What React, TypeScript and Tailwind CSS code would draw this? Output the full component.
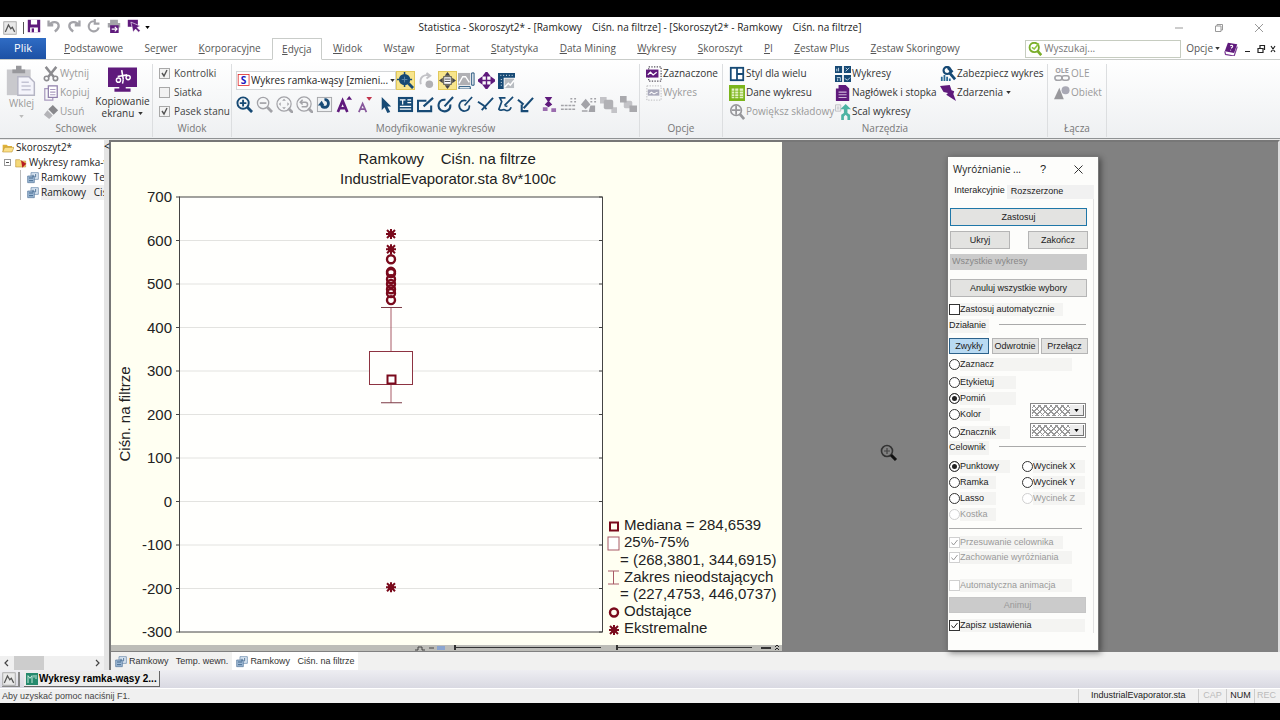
import React from 'react';

const NAVY = '#174a75';
const PURPLE = '#5f1a7c';
const GRAY = '#a3a3a8';

const line = (color: string, width = 2) => ({ fill: 'none', stroke: color, strokeWidth: width });

const icons: Record<string, React.ReactNode> = {
  app: (
    <>
      <rect x="1" y="1" width="16" height="16" fill="#e9e9e9" stroke="#9a9a9a" />
      <path d="M3 14l4-9 3 5 2-2 3 6" {...line('#555', 1.6)} />
    </>
  ),
  save: (
    <>
      <path d="M1 1h16v16H1z" fill={PURPLE} />
      <path d="M5 1h8v6H5zM4 11h10v6H4z" fill="#fff" />
      <path d="M6 12h3v5H6z" fill={PURPLE} />
    </>
  ),
  undo: <path d="M2 2v6h6M3 8c3-6 12-5 12 1 0 3-2 5-5 7" {...line(GRAY, 3)} />,
  redo: <path d="M16 2v6h-6M15 8c-3-6-12-5-12 1 0 3 2 5 5 7" {...line(GRAY, 3)} />,
  refresh: <path d="M15 11a6.500 6.500 0 1 1-5-8M10 0v6h6" {...line(GRAY, 2.8)} />,
  print: (
    <>
      <path d="M4 1h10v4H4zM1 5h16v6H1z" fill={GRAY} />
      <path d="M4 8h11v10H4z" fill={PURPLE} />
      <path d="M6 13h6M10 10l3 3-3 3" {...line('#fff', 1.4)} />
    </>
  ),
  select: (
    <>
      <path d="M1 1h13v9H1z" fill={PURPLE} />
      <path d="M5 4l12 5-4 2 4 4-2 2-4-4-3 4z" fill={PURPLE} stroke="#fff" strokeWidth=".8" />
    </>
  ),
  paste: (
    <>
      <path d="M1 3h13v14H1z" fill="#c9c9cd" />
      <path d="M4 3h7v2H4zM6 1h3v2H6z" fill="#98989c" />
      <path d="M7 7h6l3 3v7H7z" fill="#f4f4fb" stroke="#b5b5c4" strokeWidth=".8" />
      <path d="M9 10h4M9 12h5M9 14h5" {...line('#c3c3d4', 0.8)} />
    </>
  ),
  cut: (
    <>
      <path d="M3 1l9 11M15 1L6 12" {...line('#8b8b8f', 2.8)} />
      <circle cx="4" cy="14" r="2.500" {...line('#8b8b8f', 1.8)} />
      <circle cx="14" cy="14" r="2.500" {...line('#8b8b8f', 1.8)} />
    </>
  ),
  copy: (
    <>
      <path d="M2 4h9v13H2z" {...line('#a99abf', 1.4)} />
      <path d="M6 1h10v13H6z" fill="#fff" stroke="#8f7fab" strokeWidth="1.400" />
      <path d="M8 5h6M8 8h6M8 11h6" {...line('#a99abf', 1.2)} />
    </>
  ),
  erase: (
    <>
      <path d="M11 1l6 6-5 5-6-6z" fill="#88888c" />
      <path d="M5 7l6 6-4 4-6-5z" fill="#b4b4b8" />
    </>
  ),
  screen: (
    <>
      <path d="M0 1h18v12H0zM7 13h4v1h3v2H4v-2h3z" fill={PURPLE} />
      <path d="M8.500 2.500l1 6M6 6.500l6-1" {...line('#fff', 1)} />
      <circle cx="6.500" cy="8.800" r="1.300" {...line('#fff', 0.9)} />
      <circle cx="12.500" cy="7.200" r="1.300" {...line('#fff', 0.9)} />
      <path d="M9.500 8.500L9 11" {...line('#fff', 0.9)} />
    </>
  ),
  style: (
    <>
      <rect x="1.500" y="2" width="14" height="14" fill="#fff" stroke="#d22" />
      <text x="8.500" y="14" textAnchor="middle" fontSize="13" fontWeight="700" fill="#1a1ac0">S</text>
    </>
  ),
  zoomFit: (
    <>
      <circle cx="8" cy="8" r="6" fill={NAVY} />
      <path d="M8 0v16M0 8h16" {...line(NAVY, 1.6)} />
      <path d="M12 12l5 5" {...line(NAVY, 3)} />
      <path d="M8 5v6M5 8h6" {...line('#5d87aa', 1)} />
    </>
  ),
  rotate: (
    <>
      <path d="M3 13C1 5 7 2 12 4M9 1l4 3-4 3" {...line('#c3c3c7', 2)} />
      <circle cx="12" cy="13" r="4" fill="#b0b0b4" />
    </>
  ),
  center: (
    <>
      <path d="M9 0l3 4H6zM9 18l3-4H6zM0 9l4-3v6zM18 9l-4-3v6z" fill="#43434a" />
      <rect x="5" y="5" width="8" height="8" fill="#fff" stroke="#43434a" />
      <path d="M6 7.500h6M6 10h6" {...line('#43434a', 1)} />
    </>
  ),
  chartAxes: (
    <>
      <path d="M0 1h13v13H0z" fill="#b0b0b4" />
      <path d="M1 12l4-7 3 0 4 6" {...line('#fff', 1.4)} />
      <path d="M14.500 1h2.500v13h-2.500zM1 15.500h12V18H1z" {...line(NAVY, 1)} />
    </>
  ),
  move: <path d="M9 3v12M3 9h12M9 0l3 4H6zM9 18l3-4H6zM0 9l4-3v6zM18 9l-4-3v6z" fill={PURPLE} stroke={PURPLE} strokeWidth="1.500" />,
  ruler: (
    <>
      <path d="M0 1h18v5H6v12H0z" fill={NAVY} />
      <path d="M7 7h10v10H7z" fill="#b9bdc2" />
      <path d="M7 16l4-4 2 2 4-5" {...line('#fff', 1.6)} />
      <path d="M3 3v1M6 3v1M9 3v1M12 3v1M15 3v1M3 8h1M3 11h1M3 14h1" {...line('#fff', 1)} />
    </>
  ),
  zoomIn: (
    <>
      <circle cx="7.500" cy="7.500" r="6" {...line(NAVY, 2)} />
      <path d="M7.500 4v7M4 7.500h7" {...line(NAVY, 2)} />
      <path d="M12 12l5 5" {...line(NAVY, 3)} />
    </>
  ),
  zoomOut: (
    <>
      <circle cx="7.500" cy="7.500" r="6" {...line(GRAY, 1.4)} />
      <path d="M4 7.500h7" {...line(GRAY, 1.8)} />
      <path d="M12 12l5 5" {...line(GRAY, 3)} />
    </>
  ),
  zoomPan: (
    <>
      <circle cx="8.500" cy="8.500" r="7.500" {...line(GRAY, 1.3)} />
      <path d="M8.500 3l2 2h-4zM8.500 14l2-2h-4zM3 8.500l2-2v4zM14 8.500l-2-2v4z" fill={GRAY} />
      <path d="M13 13l5 5" {...line(GRAY, 3)} />
    </>
  ),
  zoomBack: (
    <>
      <circle cx="8.500" cy="8.500" r="7.500" {...line(GRAY, 1.3)} />
      <path d="M7 4L4.500 6.500 7 9M5 6.500h5c3 0 3 5 0 5H6" {...line(GRAY, 1.6)} />
      <path d="M13 13l5 5" {...line(GRAY, 3)} />
    </>
  ),
  spin: (
    <>
      <rect x="1.500" y="1.500" width="15" height="15" fill="#eef0f2" stroke="#a4a6a9" />
      <path d="M9 4c5-1 6 8 0 8-2 0-3-1-3-3" {...line(NAVY, 3)} />
      <path d="M2 10l4-5 3 5z" fill={NAVY} />
    </>
  ),
  fontUp: (
    <>
      <path d="M2 17L7 5l5 12M4 13h7" {...line(PURPLE, 2.8)} />
      <path d="M11 4l3-4 3 4z" fill={PURPLE} />
    </>
  ),
  fontDown: (
    <>
      <path d="M3 17L7 8l4 9M5 14h5" {...line('#86579b', 1.8)} />
      <path d="M11 1h6l-3 4z" fill="#c2344c" />
    </>
  ),
  arrow: <path d="M5 1v14l3-3 3 6 3-1-3-6h4z" fill={NAVY} />,
  textBox: (
    <>
      <path d="M1 1h16v16H1z" fill={NAVY} />
      <path d="M3 4h6M6 4v5M11 4h4M11 7h4M3 11h12M3 14h12" {...line('#fff', 1.3)} />
    </>
  ),
  drawRect: <path d="M10 5H1v11h14v-6M7 11l10-9" {...line(NAVY, 2.2)} />,
  drawArc: <path d="M9 4C1 3 0 12 4 15c5 3 11 0 10-6M8 11l9-10" {...line(NAVY, 2.2)} />,
  drawOval: <path d="M10 5C4 3 1 9 3 13c3 5 11 3 10-3M8 10l8-9" {...line(NAVY, 1.8)} />,
  drawLine: <path d="M1 6l6 4 3 4M5 15L17 2" {...line(NAVY, 2)} />,
  drawPoly: <path d="M9 2H3l2 4-3 8c2 3 4-1 7 1 2 1 5 0 6-3M8 10l9-9M8 10l3 1" {...line(NAVY, 1.8)} />,
  drawArrow: <path d="M1 4l6 5M17 2L7 13M5 9v7h7" {...line(NAVY, 2.2)} />,
  align: (
    <>
      <path d="M5 1h8l-4 6zM9 5l4 4-4 3-4-3z" fill={PURPLE} />
      <path d="M3 12h5v4H3zM12 13h5v4h-5z" fill="#9a6cae" />
    </>
  ),
  dash: <path d="M1 10h16M1 14h16M11 3h2M15 3h2M11 6h2M15 6h2" {...line(GRAY, 1.6)} strokeDasharray="3 1" />,
  fill: (
    <>
      <path d="M1 9l5-6 5 6-5 5zM11 10h5v7H9z" fill={GRAY} />
      <path d="M11 3h2M15 3h2M11 6h2M15 6h2M2 16h6" {...line(GRAY, 1.6)} />
    </>
  ),
  front: (
    <>
      <path d="M0 1h7v7H0zM12 12h6v6h-6z" fill="#c3c3c7" />
      <rect x="4" y="4" width="10" height="10" rx="2" fill="#b1b1b5" />
    </>
  ),
  back: (
    <>
      <rect x="4" y="5" width="9" height="8" rx="2" fill="#c3c3c7" />
      <path d="M0 0h7v7H0zM10 10h8v7h-8z" fill="#a9a9ad" />
    </>
  ),
  marked: (
    <>
      <path d="M3 1h14v16H3z" {...line('#55505c', 1.4)} strokeDasharray="1.500 1.500" />
      <path d="M0 4h14v9H0z" fill={PURPLE} />
      <path d="M2 10l3-3 3 3 4-3" {...line('#fff', 1.4)} />
    </>
  ),
  chartOff: (
    <>
      <path d="M1 1h16v16H1z" {...line('#b4b4b8', 1)} strokeDasharray="1.500 1.500" />
      <path d="M2 5h13v7H2z" fill="#a9a9bb" />
      <path d="M4 10l2-2 3 2 4-2" {...line('#fff', 1.2)} />
    </>
  ),
  layout: (
    <>
      <path d="M1 1h16v16H1z" fill={NAVY} />
      <path d="M3 3h5v12H3zM10 3h5v5h-5zM10 10h5v5h-5z" fill="#fff" />
    </>
  ),
  sheet: (
    <>
      <path d="M0 0h18v18H0z" fill="#7cb51c" />
      <path d="M3 4h3v11H3zM7 4h3.500v11H7zM12 4h4v11h-4z" fill="#e4f2c4" />
      <path d="M3 7h13M3 10h13M3 13h13" {...line('#7cb51c', 0.8)} />
    </>
  ),
  zoomPart: (
    <>
      <circle cx="8" cy="7" r="6" {...line('#97979b', 1.8)} />
      <path d="M8 2v10M3 7h10" {...line('#97979b', 2)} />
      <path d="M12 11l5 6" {...line('#97979b', 3)} />
    </>
  ),
  charts: (
    <>
      <path d="M0 0h8v8H0zM10 0h8v8h-8zM0 10h8v8H0zM10 10h8v8h-8z" fill={NAVY} />
      <path d="M2 6V3M4 6V2M2 13h4M12 6l4-4M12 2l2 2M3 17v-3M6 17v-4M11 14l3 2 3-3" {...line('#cfe0ee', 1)} />
    </>
  ),
  header: (
    <>
      <path d="M4 0h8l4 4v14H1V4h3z" fill={PURPLE} />
      <path d="M4 8h9M4 11h9M4 14h9" {...line('#cdb4d8', 1.2)} />
    </>
  ),
  merge: (
    <>
      <path d="M.5 1h6v7h-6zM2 3.500h3M2 5.500h3" {...line('#b9b9bd', 1)} />
      <path d="M12 0l6 6h-4v4l3 2v6h-3v-4l-2-2-2 2v4H7v-6l3-2V6H6z" fill="#4cb3a3" />
    </>
  ),
  secure: (
    <>
      <circle cx="8" cy="5" r="4" {...line(NAVY, 2.4)} />
      <path d="M11 8l6 7M9 2l5 5" {...line(NAVY, 3.2)} />
      <path d="M2 17v-5M5 17v-7M8 17v-5M11 17v-3" {...line('#2a6a96', 2)} />
    </>
  ),
  events: <path d="M0 1l11-1 2 6 3 1-1 3 3 8-11-7 2-2-5-1z" fill={PURPLE} />,
  ole: (
    <>
      <text x="9" y="8" textAnchor="middle" fontSize="8" fontWeight="700" fill="#a0a0a4">OLE</text>
      <rect x="1" y="11" width="8" height="5" rx="2.500" {...line(GRAY, 1.8)} />
      <rect x="9" y="11" width="8" height="5" rx="2.500" {...line(GRAY, 1.8)} />
    </>
  ),
  object: (
    <>
      <circle cx="13" cy="6" r="4.500" fill="#a9a9b5" />
      <path d="M6 3l5 13H0z" fill="#98989c" />
    </>
  ),
  search: (
    <>
      <circle cx="8" cy="7" r="6" {...line('#7aae2a', 2.4)} />
      <path d="M12 11l5 6" {...line('#7aae2a', 3.4)} />
      <path d="M5 7l3 2 6-7" {...line('#8dc63f', 2)} />
    </>
  ),
  book: (
    <>
      <path d="M5 1l12 2-4 11-12-2z" fill={PURPLE} />
      <path d="M1 12l1 4 11 2 4-12" {...line('#7d3f96', 1.6)} />
      <path d="M8 5c3-2 5 1 1 3M8.500 10v1" {...line('#fff', 1.3)} />
    </>
  ),
  folder: (
    <>
      <path d="M1 4h6l2 2h6v9H1z" fill="#e0b23a" />
      <path d="M4 8h14l-3 7H1z" fill="#fbe08a" stroke="#b58a25" strokeWidth=".8" />
    </>
  ),
  folderMark: (
    <>
      <path d="M1 4h6l2 2h7v9H1z" fill="#f4d878" stroke="#b58a25" strokeWidth=".8" />
      <path d="M9 5l8 5-6 6z" fill="#b81e22" />
    </>
  ),
  graph: (
    <>
      <path d="M6 1h11v10H6z" fill="#dde8f4" stroke="#5b7ea3" />
      <path d="M1 6h10v10H1z" fill="#9db8d4" stroke="#4e7197" />
      <path d="M3 9h6M3 13h6M9 4v4M13 3v5" {...line('#31597f', 1.2)} />
    </>
  ),
  book2: (
    <>
      <path d="M0 0h18v18H0z" fill="#258a6d" />
      <path d="M3 15V4l3 4 3-4v11M12 3v4M15 3v6" {...line('#d4f0e5', 1.4)} />
    </>
  ),
};

const Icon: React.FC<{ name: string; className?: string }> = ({ name, className = 'size-4' }) => (
  <svg viewBox="0 0 18 18" className={`shrink-0 ${className}`} aria-hidden="true">
    {icons[name]}
  </svg>
);

const Caret: React.FC<{ className?: string }> = ({ className = 'text-[#333]' }) => (
  <svg viewBox="0 0 6 4" className={`h-[3px] w-[5px] shrink-0 ${className}`} aria-hidden="true">
    <path d="M0 0h6L3 4z" fill="currentColor" />
  </svg>
);

const TitleBar = () => (
  <header className="flex h-[21px] items-center bg-white">
    <div className="flex flex-1 items-center">
      <Icon name="app" className="ml-[3px] size-3.5" />
      <span className="mr-[3px] ml-1.5 h-3 w-px bg-[#555]" />
      <div className="flex items-center gap-1.5 pb-1">
        {['save', 'undo', 'redo', 'refresh', 'print', 'select'].map((name) => (
          <button key={name} type="button" aria-label={name}>
            <Icon name={name} className="size-3.5" />
          </button>
        ))}
      </div>
      <Caret className="ml-1 text-black" />
    </div>
    <h1 className="text-[10px] whitespace-pre text-[#222]">
      {'Statistica - Skoroszyt2* - [Ramkowy    Ciśn. na filtrze] - [Skoroszyt2* - Ramkowy    Ciśn. na filtrze]'}
    </h1>
    <div className="flex flex-1 items-center justify-end gap-8 text-[#999]">
      <button type="button" aria-label="Minimize">
        <svg viewBox="0 0 8 8" className="size-2"><path d="M0 4h8" stroke="currentColor" /></svg>
      </button>
      <button type="button" aria-label="Restore">
        <svg viewBox="0 0 8 8" className="size-2"><path d="M.5 2h5.500v5.500H.5zM2 2V.5h5.500V6H6" fill="none" stroke="currentColor" /></svg>
      </button>
      <button type="button" aria-label="Close" className="mr-[17px]">
        <svg viewBox="0 0 8 8" className="size-2"><path d="M0 0l8 8M8 0L0 8" stroke="currentColor" /></svg>
      </button>
    </div>
  </header>
);

const tabs = [
  ['', 'P', 'odstawowe'],
  ['Se', 'r', 'wer'],
  ['', 'K', 'orporacyjne'],
  ['', 'E', 'dycja'],
  ['', 'W', 'idok'],
  ['Wst', 'a', 'w'],
  ['', 'F', 'ormat'],
  ['', 'S', 'tatystyka'],
  ['', 'D', 'ata Mining'],
  ['', 'W', 'ykresy'],
  ['', 'S', 'koroszyt'],
  ['', 'P', 'I'],
  ['', 'Z', 'estaw Plus'],
  ['', 'Z', 'estaw Skoringowy'],
];

const TabBar = () => (
  <nav className="flex h-[22px] items-stretch border-b border-[#c9ccc9] bg-white text-[10px] text-[#555]">
    <button type="button" className="mr-2 w-[46px] bg-linear-to-b from-[#2f6cc4] to-[#1d51a5] text-[11px] text-white">Plik</button>
    <div className="flex w-[916px] justify-between">
      {tabs.map(([before, key, after]) => (
        <button
          key={before + key + after}
          type="button"
          className={`border px-[9px] whitespace-nowrap ${after === 'dycja' ? '-mb-px border-[#c9ccc9] border-b-white bg-white' : 'border-transparent'}`}
        >
          {before}<u>{key}</u>{after}
        </button>
      ))}
    </div>
    <div className="ml-auto flex items-center gap-1 pr-1">
      <label className="mr-px flex h-[18px] w-[156px] items-center gap-0.5 border border-[#c6ccc0] px-0.5">
        <Icon name="search" className="size-3.5" />
        <input aria-label="Wyszukaj" placeholder="Wyszukaj..." className="w-full min-w-0 outline-none placeholder:text-[#777]" />
      </label>
      <button type="button" className="flex items-center gap-0.5">Opcje<Caret /></button>
      <Icon name="book" className="size-3.5" />
      <svg viewBox="0 0 32 8" className="ml-0.5 h-2 w-8 text-[#222]" aria-hidden="true">
        <path d="M1 6.500h5M14 3.500h5v4h-5zM16 3V.5h4.500V5M27 1l4 6M31 1l-4 6" fill="none" stroke="currentColor" strokeWidth="1.200" />
      </svg>
    </div>
  </nav>
);

const Group: React.FC<{ label: string; className: string; children: React.ReactNode }> = ({ label, className, children }) => (
  <section className={`flex shrink-0 flex-col border-r border-[#dcdee0] ${className}`}>
    <div className="flex flex-1">{children}</div>
    <h2 className="h-4 text-center leading-[14px] text-[#777]">{label}</h2>
  </section>
);

const Tool: React.FC<{ icon: string; label: string; disabled?: boolean; caret?: boolean }> = ({ icon, label, disabled, caret }) => (
  <button type="button" disabled={disabled} className="flex h-[19px] items-center gap-px whitespace-nowrap text-[#333] disabled:text-[#9a9a9a]">
    <Icon name={icon} />
    {label}
    {caret && <Caret className="ml-0.5" />}
  </button>
);

const RibbonCheck: React.FC<{ label: string; checked?: boolean }> = ({ label, checked }) => (
  <label className="flex h-[19px] items-center gap-1 whitespace-nowrap text-[#444]">
    <span className="grid size-[11px]">
      <input type="checkbox" defaultChecked={checked} className="peer col-start-1 row-start-1 size-[11px] appearance-none border border-[#a8a8a8] bg-[#f2f2f2]" />
      <svg viewBox="0 0 11 11" className="pointer-events-none invisible col-start-1 row-start-1 peer-checked:visible"><path d="M3 5l2 3 3-6" {...line('#555', 1.4)} /></svg>
    </span>
    {label}
  </label>
);

const IconRow: React.FC<{ names: string[]; className?: string }> = ({ names, className = '' }) => (
  <div className={`flex items-center gap-[3px] ${className}`}>
    {names.map((name) => (
      <button key={name} type="button" aria-label={name}><Icon name={name} className="size-[17px]" /></button>
    ))}
  </div>
);

const Ribbon = () => (
  <div className="flex h-[79px] border-b border-[#8f9294] bg-linear-to-b from-white to-[#eef0f2] pt-1 pb-px text-[10px]">
    <Group label="Schowek" className="w-[153px]">
      <button type="button" disabled className="flex w-[43px] flex-col items-center text-[#999]">
        <Icon name="paste" className="size-[33px]" />
        <span className="leading-3">Wklej</span>
        <Caret className="mt-1.5 text-[#bbb]" />
      </button>
      <div className="w-[50px]">
        <Tool icon="cut" label="Wytnij" disabled />
        <Tool icon="copy" label="Kopiuj" disabled />
        <Tool icon="erase" label="Usuń" disabled />
      </div>
      <button type="button" className="flex flex-1 flex-col items-center pt-0.5 text-[#333]">
        <Icon name="screen" className="size-[29px]" />
        <span className="leading-3">Kopiowanie</span>
        <span className="flex items-center gap-1 leading-3">ekranu<Caret /></span>
      </button>
    </Group>
    <Group label="Widok" className="w-[79px]">
      <div className="pl-1.5">
        <RibbonCheck label="Kontrolki" checked />
        <RibbonCheck label="Siatka" />
        <RibbonCheck label="Pasek stanu" checked />
      </div>
    </Group>
    <Group label="Modyfikowanie wykresów" className="w-[408px]">
      <div className="flex flex-col pl-1">
        <div className="flex h-8 items-center">
          <label className="flex h-[19px] w-40 items-center border border-[#d4d6d8] bg-white">
            <Icon name="style" className="size-3.5" />
            <select aria-label="Styl wykresu" className="min-w-0 flex-1 appearance-none whitespace-nowrap text-[#222] outline-none">
              <option>Wykres ramka-wąsy [zmieni...</option>
            </select>
            <Caret />
          </label>
          <button type="button" aria-label="zoomFit" className="border border-[#e2c95c] bg-[#f8e58c]"><Icon name="zoomFit" className="size-[17px]" /></button>
          <IconRow names={['rotate']} className="mx-[3px]" />
          <button type="button" aria-label="center" className="mr-px border border-[#e2c95c] bg-[#f8e58c]"><Icon name="center" className="size-[17px]" /></button>
          <IconRow names={['chartAxes', 'move', 'ruler']} />
        </div>
        <div className="flex">
          <IconRow names={['zoomIn', 'zoomOut', 'zoomPan', 'zoomBack', 'spin', 'fontUp', 'fontDown']} />
          <IconRow names={['arrow', 'textBox', 'drawRect', 'drawArc', 'drawOval', 'drawLine', 'drawPoly', 'drawArrow']} className="ml-1" />
          <IconRow names={['align', 'dash', 'fill', 'front', 'back']} className="ml-1.5" />
        </div>
      </div>
    </Group>
    <Group label="Opcje" className="w-[83px]">
      <div className="pl-1.5">
        <Tool icon="marked" label="Zaznaczone" />
        <Tool icon="chartOff" label="Wykres" disabled />
      </div>
    </Group>
    <Group label="Narzędzia" className="w-[325px]">
      <div className="w-[106px] pl-1.5">
        <Tool icon="layout" label="Styl dla wielu" />
        <Tool icon="sheet" label="Dane wykresu" />
        <Tool icon="zoomPart" label="Powiększ składowy" disabled />
      </div>
      <div className="w-[105px] pl-1.5">
        <Tool icon="charts" label="Wykresy" />
        <Tool icon="header" label="Nagłówek i stopka" />
        <Tool icon="merge" label="Scal wykresy" />
      </div>
      <div className="pl-1.5">
        <Tool icon="secure" label="Zabezpiecz wykres" />
        <Tool icon="events" label="Zdarzenia" caret />
      </div>
    </Group>
    <Group label="Łącza" className="w-[59px]">
      <div className="pl-1.5">
        <Tool icon="ole" label="OLE" disabled />
        <Tool icon="object" label="Obiekt" disabled />
      </div>
    </Group>
  </div>
);

const Tree = () => (
  <aside className="flex w-[104px] shrink-0 flex-col bg-white text-[10px] text-[#222]">
    <ul className="flex-1 overflow-hidden leading-[15px] whitespace-pre">
      <li className="flex items-center gap-0.5 pl-0.5"><Icon name="folder" className="size-3" />Skoroszyt2*</li>
      <li className="flex items-center gap-0.5 pl-1">
        <span className="mr-0.5 flex size-[7px] shrink-0 items-center justify-center border border-[#999]"><span className="h-px w-[3px] bg-[#555]" /></span>
        <Icon name="folderMark" className="size-3" />
        Wykresy ramka-wąsy
      </li>
      <li className="ml-5 flex items-center gap-0.5 border-l border-[#bbb] pl-1.5"><Icon name="graph" className="size-3" />{'Ramkowy   Temp. wewn.'}</li>
      <li className="ml-5 flex items-center gap-0.5 border-l border-[#bbb] pl-1.5"><Icon name="graph" className="size-3" /><span className="bg-[#f0f0f0]">{'Ramkowy   Ciśn. na filtrze'}</span></li>
    </ul>
    <div className="flex h-[14px] items-center bg-[#f0f0f0] px-1">
      <svg viewBox="0 0 5 8" className="h-2 w-[5px]"><path d="M4 1L1 4l3 3" {...line('#444', 1.2)} /></svg>
      <span className="ml-[5px] h-full w-[30px] bg-[#cdcdcd]" />
      <svg viewBox="0 0 5 8" className="ml-auto h-2 w-[5px]"><path d="M1 1l3 3-3 3" {...line('#444', 1.2)} /></svg>
    </div>
  </aside>
);

const MAROON = '#7a0a1c';
const CX = 280;
const yOf = (value: number) => 55 + (700 - value) * 0.435;
const ticks = [700, 600, 500, 400, 300, 200, 100, 0, -100, -200, -300];
const outliers = [557, 528, 525, 511, 500, 488, 479, 463];
const extremes = [615, 580, -197];

const Star: React.FC<{ x: number; y: number }> = ({ x, y }) => (
  <g>
    <path d={`M${x} ${y - 5}v10M${x - 5} ${y}h10M${x - 4} ${y - 4}l8 8M${x + 4} ${y - 4}l-8 8`} {...line(MAROON, 2)} />
    <circle cx={x} cy={y} r="3" fill={MAROON} />
  </g>
);

const BoxPlot = () => (
  <svg viewBox="0 0 671 503" className="block w-full bg-[#fffff2]" fontFamily="Liberation Sans, Arial, sans-serif" fontSize="15" fill="#222">
    <g textAnchor="middle">
      <text x="336" y="22" className="whitespace-pre">{'Ramkowy    Ciśn. na filtrze'}</text>
      <text x="337" y="42">IndustrialEvaporator.sta 8v*100c</text>
      <text transform="translate(19 272) rotate(-90)">Ciśn. na filtrze</text>
    </g>
    <rect x="68.500" y={yOf(700)} width="423" height="435" fill="#fffffd" stroke="#444" />
    {ticks.map((t) => (
      <g key={t}>
        <text x="61" y={yOf(t) + 5} textAnchor="end">{t}</text>
        {t < 700 && t > -300 && <path d={`M69 ${yOf(t)}h422`} stroke="#e3e3e0" />}
        <path d={`M65 ${yOf(t)}h4M491 ${yOf(t)}h-3`} stroke="#444" />
      </g>
    ))}
    <path d={`M${CX} ${yOf(446)}V${yOf(227)}`} stroke="#a85a66" />
    <path d={`M270 ${yOf(446)}h21M270 ${yOf(227)}h21`} stroke="#7b3a44" />
    <rect x="258.500" y="209.500" width="43" height="33" fill="#fffffd" stroke="#8d3341" />
    <rect x="276.500" y="233.500" width="8" height="8" fill="#fff" stroke={MAROON} strokeWidth="2" />
    {outliers.map((v) => <circle key={v} cx={CX} cy={yOf(v)} r="4" {...line(MAROON, 2.4)} />)}
    {extremes.map((v) => <Star key={v} x={CX} y={yOf(v)} />)}

    <rect x="499" y="380.500" width="8" height="8" {...line(MAROON, 2)} />
    <text x="513" y="388">Mediana = 284,6539</text>
    <rect x="497" y="395" width="11" height="13" fill="#fff" stroke="#a85a66" />
    <text x="513" y="405">25%-75%</text>
    <text x="509" y="423">= (268,3801, 344,6915)</text>
    <path d="M497 429h11M497 442h11M502.500 429v13" stroke="#a85a66" />
    <text x="513" y="440">Zakres nieodstających</text>
    <text x="509" y="457">= (227,4753, 446,0737)</text>
    <circle cx="503" cy="470.500" r="4" {...line(MAROON, 2.4)} />
    <text x="513" y="474">Odstające</text>
    <Star x={503} y={488} />
    <text x="513" y="491">Ekstremalne</text>
  </svg>
);

const SliderStrip = () => (
  <svg viewBox="0 0 671 6" className="block w-full bg-[#bdbdb8]" aria-hidden="true">
    <path d="M304 5h3v-3h4v3h3M318 3h5" {...line('#444', 1)} />
    <path d="M326 1h8v4h-8z" fill="#8ba5cf" />
    <path d="M344 2.500h146M506 2.500h135" {...line('#333', 1)} />
    <path d="M343 0h2v5h-2zM505 0h2v5h-2zM650 2h10v2h-10z" fill="#333" />
    <path d="M664 2l2-2 2 2M664 5l2-2 2 2" {...line('#222', 1)} />
  </svg>
);

const DialogButton: React.FC<{ className: string; children: React.ReactNode; disabled?: boolean }> = ({ className, children, disabled }) => (
  <button type="button" disabled={disabled} className={`border border-[#b5b5b5] bg-[#e3e3e1] pt-px text-center disabled:border-[#c6c6c6] disabled:bg-[#cbcbcb] disabled:text-[#999] ${className}`}>
    {children}
  </button>
);

interface OptionProps {
  label: string;
  labelWidth: string;
  name?: string;
  checked?: boolean;
  disabled?: boolean;
  className?: string;
}

const labelStyle = 'flex h-[13px] items-center bg-[#f4f4f2] pt-px whitespace-nowrap';

const Radio: React.FC<OptionProps> = ({ label, labelWidth, name, checked, disabled, className = '' }) => (
  <label className={`flex h-4 items-center ${disabled ? 'text-[#999]' : ''} ${className}`}>
    <input
      type="radio"
      name={name}
      defaultChecked={checked}
      disabled={disabled}
      className="size-[11px] shrink-0 appearance-none rounded-full border border-[#333] bg-white checked:bg-[#222] checked:shadow-[inset_0_0_0_2px_white] disabled:border-[#d0d0d0]"
    />
    <span className={`${labelStyle} ${labelWidth}`}>{label}</span>
  </label>
);

const Check: React.FC<OptionProps> = ({ label, labelWidth, checked, disabled, className = 'h-4' }) => (
  <label className={`flex items-center ${disabled ? 'text-[#999]' : ''} ${className}`}>
    <span className="grid size-[11px] shrink-0">
      <input type="checkbox" defaultChecked={checked} disabled={disabled} className="peer col-start-1 row-start-1 size-[11px] appearance-none border border-[#333] bg-white disabled:border-[#d0d0d0]" />
      <svg viewBox="0 0 11 11" className="pointer-events-none invisible col-start-1 row-start-1 peer-checked:visible"><path d="M2.500 5.500l2 2.500 4-5" fill="none" stroke="currentColor" /></svg>
    </span>
    <span className={`${labelStyle} ${labelWidth}`}>{label}</span>
  </label>
);

const PatternSelect: React.FC<{ label: string }> = ({ label }) => (
  <div className="flex h-[15px] w-14 border border-[#888] bg-white p-px">
    <select
      aria-label={label}
      className="min-w-0 flex-1 appearance-none bg-[repeating-linear-gradient(45deg,#999_0_1px,transparent_1px_4px),repeating-linear-gradient(-45deg,#999_0_1px,transparent_1px_4px)]"
    />
    <span className="flex w-3.5 items-center justify-center border-r border-b border-[#777] bg-[#ececec]"><Caret className="text-black" /></span>
  </div>
);

const Heading: React.FC<{ children: string }> = ({ children }) => (
  <h3 className="flex h-4 items-center gap-2.5">
    <span className="w-10 bg-[#f4f4f2]">{children}</span>
    <span className="mr-0.5 mb-1 h-px flex-1 bg-[#aaa]" />
  </h3>
);

const HighlightDialog = () => (
  <section
    role="dialog"
    aria-label="Wyróżnianie"
    className="absolute top-4 right-[181px] w-[152px] border border-[#777] bg-[#fdfdfb] pb-[17px] font-['Liberation_Sans',Arial,sans-serif] text-[9px] text-[#222] shadow-[2px_2px_6px_rgba(0,0,0,0.45)]"
  >
    <header className="flex h-[25px] items-center pr-[15px] pl-[5px]">
      <h2 className="flex-1 font-['Open_Sans',sans-serif] text-[10px]">Wyróżnianie ...</h2>
      <button type="button" aria-label="Pomoc" className="mr-7 text-[11px]">?</button>
      <button type="button" aria-label="Zamknij">
        <svg viewBox="0 0 9 9" className="size-[9px]"><path d="M.5.5l8 8M8.500.5l-8 8" stroke="#333" /></svg>
      </button>
    </header>
    <div className="mr-1 flex h-[17px] items-end">
      <button type="button" className="h-[17px] w-[59px] pl-1 whitespace-nowrap">Interakcyjnie</button>
      <button type="button" className="h-3.5 w-[60px] bg-[#f1f1f1]">Rozszerzone</button>
      <span className="h-3.5 flex-1 bg-[#f1f1f1]" />
    </div>
    <div className="mr-1 border-r border-[#e2e2e2] pr-[5px] pl-px">
      <DialogButton className="mt-[9px] ml-px h-[18px] w-[137px] outline-1 -outline-offset-1 outline-[#1f77a8]">Zastosuj</DialogButton>
      <div className="mt-[5px] ml-px flex justify-between">
        <DialogButton className="h-[18px] w-[60px]">Ukryj</DialogButton>
        <DialogButton className="h-[18px] w-[60px]">Zakończ</DialogButton>
      </div>
      <select disabled aria-label="Wykresy" className="mt-[5px] ml-px block h-4 w-[137px] appearance-none bg-[#cbcbcb] px-0.5 text-[#888]">
        <option>Wszystkie wykresy</option>
      </select>
      <DialogButton className="mt-[9px] ml-px h-[18px] w-[137px]">Anuluj wszystkie wybory</DialogButton>
      <Check label="Zastosuj automatycznie" labelWidth="w-[103px]" className="mt-1 h-4" />
      <div className="mt-px"><Heading>Działanie</Heading></div>
      <div className="mt-1 flex justify-between">
        <DialogButton className="h-4 w-10 border-[#2c628b]! bg-[#b9daf2]!">Zwykły</DialogButton>
        <DialogButton className="h-4 w-[47px]">Odwrotnie</DialogButton>
        <DialogButton className="h-4 w-[47px]">Przełącz</DialogButton>
      </div>
      <div className="mt-0.5 flex justify-between">
        <div>
          <Radio name="action" label="Zaznacz" labelWidth="w-28" className="mb-0.5" />
          <Radio name="action" label="Etykietuj" labelWidth="w-14" />
          <Radio name="action" label="Pomiń" labelWidth="w-14" checked />
          <Radio name="action" label="Kolor" labelWidth="w-[30px]" className="mb-0.5" />
          <Radio name="action" label="Znacznik" labelWidth="w-[50px]" />
        </div>
        <div className="-ml-12 flex flex-col justify-end gap-[5px] pr-0.5 pb-0.5">
          <PatternSelect label="Kolor" />
          <PatternSelect label="Znacznik" />
        </div>
      </div>
      <Heading>Celownik</Heading>
      <div className="mt-0.5 grid grid-cols-[73px_1fr]">
        <Radio name="brush" label="Punktowy" labelWidth="w-[50px]" checked />
        <Radio name="axis" label="Wycinek X" labelWidth="w-[52px]" />
        <Radio name="brush" label="Ramka" labelWidth="w-9" />
        <Radio name="axis" label="Wycinek Y" labelWidth="w-[52px]" />
        <Radio name="brush" label="Lasso" labelWidth="w-9" />
        <Radio name="axis" label="Wycinek Z" labelWidth="w-[52px]" disabled />
        <Radio name="brush" label="Kostka" labelWidth="w-9" disabled />
      </div>
      <hr className="mt-1.5 mr-1.5 mb-1.5 border-[#aaa]" />
      <Check label="Przesuwanie celownika" labelWidth="w-[103px]" className="h-[15px]" checked disabled />
      <Check label="Zachowanie wyróżniania" labelWidth="w-[112px]" className="h-[15px]" checked disabled />
      <Check label="Automatyczna animacja" labelWidth="w-28" className="mt-3 h-4" disabled />
      <DialogButton disabled className="mt-1 h-4 w-[137px]">Animuj</DialogButton>
      <Check label="Zapisz ustawienia" labelWidth="w-[125px]" className="mt-1 h-4" checked />
    </div>
  </section>
);

const SheetTab: React.FC<{ name: string; active?: boolean }> = ({ name, active }) => (
  <button type="button" className={`flex items-center gap-0.5 px-1 pt-0.5 whitespace-pre ${active ? 'bg-white' : ''}`}>
    <Icon name="graph" className="size-3" />
    {`Ramkowy   ${name}`}
  </button>
);

export default function App() {
  return (
    <div className="flex min-h-screen flex-col bg-black py-[17px] font-['Open_Sans','Noto_Sans',sans-serif]">
      <TitleBar />
      <TabBar />
      <Ribbon />
      <div className="flex flex-1 bg-[#e9e9e9] pt-px">
        <Tree />
        <div className="w-[7px] shrink-0 border-r-2 border-[#777] bg-[#e4e4e4] text-[10px] leading-3">&lt;</div>
        <main className="relative flex min-w-0 flex-1 flex-col bg-[#f1f1f0] font-['Liberation_Sans',Arial,sans-serif] text-[9px] text-[#333]">
          <div className="flex-1 border-t-2 border-r-2 border-t-[#777] border-r-[#ddd] bg-[#818181]">
            <div className="w-[671px] max-w-full">
              <BoxPlot />
              <SliderStrip />
            </div>
          </div>
          <div className="flex h-[18px]">
            <SheetTab name="Temp. wewn." />
            <SheetTab name="Ciśn. na filtrze" active />
          </div>
          <HighlightDialog />
          <svg viewBox="0 0 18 18" className="absolute top-[304px] left-[769px] size-[18px]" aria-hidden="true">
            <circle cx="7" cy="7" r="5.500" {...line('#333', 1.6)} />
            <path d="M7 4v6M4 7h6" {...line('#444', 1.2)} />
            <path d="M11 11l5 5" {...line('#111', 3)} />
          </svg>
        </main>
      </div>
      <div className="flex h-[18px] items-center gap-1 bg-linear-to-b from-[#eeeef2] to-[#d9d9e2] px-0.5 font-['Liberation_Sans',Arial,sans-serif] text-[10px]">
        <button type="button" aria-label="Statistica" className="border-r-2 border-b border-[#888] pr-0.5"><Icon name="app" className="size-[14px]" /></button>
        <button type="button" className="flex h-4 w-[136px] items-center gap-px border-r border-b border-[#666] bg-[#ececec] pl-0.5 font-bold whitespace-nowrap text-black">
          <Icon name="book2" className="size-3" />
          Wykresy ramka-wąsy 2...
        </button>
      </div>
      <footer className="flex h-[15px] items-center border-t border-white bg-[#f0f0f0] px-0.5 font-['Liberation_Sans',Arial,sans-serif] text-[9px] text-[#444]">
        <p className="flex-1 pt-px">Aby uzyskać pomoc naciśnij F1.</p>
        <p className="w-[120px] border-l border-[#ccc] pl-3 text-[#222]">IndustrialEvaporator.sta</p>
        <p className="w-7 border-l border-[#ccc] text-center text-[#bbb]">CAP</p>
        <p className="w-7 border-l border-[#ccc] text-center text-[#222]">NUM</p>
        <p className="w-6 border-l border-[#ccc] text-center text-[#bbb]">REC</p>
      </footer>
    </div>
  );
}
